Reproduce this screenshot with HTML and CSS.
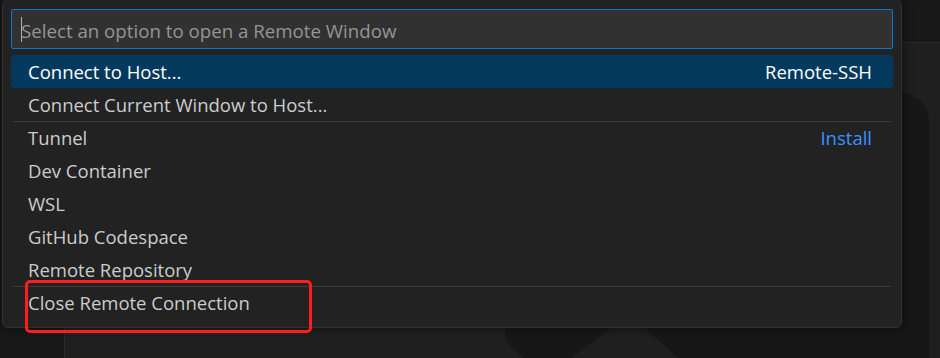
FILE: index.html
```html
<!DOCTYPE html>
<html lang="en">
<head>
  <meta charset="UTF-8">
  <meta name="viewport" content="width=device-width, initial-scale=1.0">
  <title>Remote Window</title>
  <link rel="stylesheet" href="styles.css">
</head>
<body>
  <div class="workbench">
    <div class="sidebar"></div>
    <div class="main">
      <div class="tabs"></div>
      <div class="editor">
        <!-- letterpress logo in the empty editor -->
        <svg class="watermark" viewBox="0 0 100 100" width="424" height="424">
          <path fill="#171717" d="M70.91 99.32C72.49 99.93 74.28 99.89 75.87 99.13L96.46 89.22C98.62 88.18 100 85.99 100 83.59V16.41C100 14.01 98.62 11.82 96.46 10.78L75.87 0.87C73.79 -0.13 71.34 0.12 69.51 1.450C69.25 1.64 69 1.85 68.77 2.08L29.36 38.04L12.19 25.01C10.59 23.8 8.35 23.9 6.87 25.25L1.36 30.25C-0.45 31.91 -0.45 34.76 1.36 36.42L16.25 50L1.36 63.58C-0.45 65.24 -0.45 68.09 1.36 69.75L6.87 74.75C8.35 76.1 10.59 76.2 12.19 74.99L29.36 61.96L68.77 97.92C69.39 98.54 70.12 99.01 70.91 99.32ZM75.02 27.3L45.11 50L75.02 72.7V27.3Z"/>
        </svg>
      </div>
    </div>
  </div>

  <div class="quick-pick">
    <div class="quick-input">
      <span class="caret"></span>
      <input type="text" placeholder="Select an option to open a Remote Window">
    </div>
    <div class="quick-list">
      <div class="item selected">
        <span class="label">Connect to Host...</span>
        <span class="detail">Remote-SSH</span>
      </div>
      <div class="item"><span class="label">Connect Current Window to Host...</span></div>
      <div class="item sep">
        <span class="label">Tunnel</span>
        <a href="#" class="action">Install</a>
      </div>
      <div class="item"><span class="label">Dev Container</span></div>
      <div class="item"><span class="label">WSL</span></div>
      <div class="item"><span class="label">GitHub Codespace</span></div>
      <div class="item"><span class="label">Remote Repository</span></div>
      <div class="item sep"><span class="label">Close Remote Connection</span></div>
    </div>
  </div>

  <div class="highlight"></div>
</body>
</html>
```

FILE: styles.css
```css
html, body {
  margin: 0;
  padding: 0;
  height: 100%;
}
body {
  background: #1f1f1f;
  font-family: "Open Sans", "Noto Sans", sans-serif;
  font-size: 18.5px;
  color: #cccccc;
  overflow: hidden;
}

/* background workbench */
.workbench {
  display: flex;
  height: 100%;
}
.sidebar {
  width: 64px;
  background: #181818;
  border-right: 1px solid #2b2b2b;
}
.main {
  flex: 1;
  display: flex;
  flex-direction: column;
}
.tabs {
  height: 42px;
  background: #181818;
  border-bottom: 1px solid #2b2b2b;
}
.editor {
  flex: 1;
  position: relative;
  overflow: hidden;
  background: #1f1f1f;
}
.watermark {
  position: absolute;
  left: 440px;
  top: 8px;
}

/* quick pick */
.quick-pick {
  position: absolute;
  left: 2px;
  top: -1px;
  width: 900px;
  box-sizing: border-box;
  padding: 9px 8px 8px;
  background: #222222;
  border: 1px solid #313131;
  border-radius: 6px;
  box-shadow: 0 0 8px 2px rgba(0, 0, 0, 0.36);
}
.quick-input {
  position: relative;
  height: 40px;
  box-sizing: border-box;
  border: 1px solid #0078d4;
  border-radius: 2px;
  background: #313131;
  display: flex;
  align-items: center;
}
.quick-input input {
  flex: 1;
  border: none;
  outline: none;
  background: transparent;
  padding: 2px 9px 0;
  font-family: inherit;
  font-size: 18.7px;
  color: #cccccc;
}
.quick-input input::placeholder {
  color: #959595;
}
.caret {
  position: absolute;
  left: 9px;
  top: 7px;
  width: 1px;
  height: 25px;
  background: #aeafad;
}
.quick-list {
  margin-top: 6px;
}
.item {
  height: 33px;
  display: flex;
  align-items: center;
  justify-content: space-between;
  padding: 0 21px 0 17px;
  border-radius: 3px;
}
.item.sep {
  background: linear-gradient(#3c3c3c, #3c3c3c) 2px 0 / calc(100% - 4px) 1px no-repeat;
}
.item.selected {
  background: #04395e;
  color: #ffffff;
}
.action {
  color: #3794ff;
  text-decoration: none;
}

/* red annotation box */
.highlight {
  position: absolute;
  left: 25px;
  top: 280px;
  width: 287px;
  height: 53px;
  box-sizing: border-box;
  border: 3px solid #ff1e1e;
  border-radius: 5px;
}
```
